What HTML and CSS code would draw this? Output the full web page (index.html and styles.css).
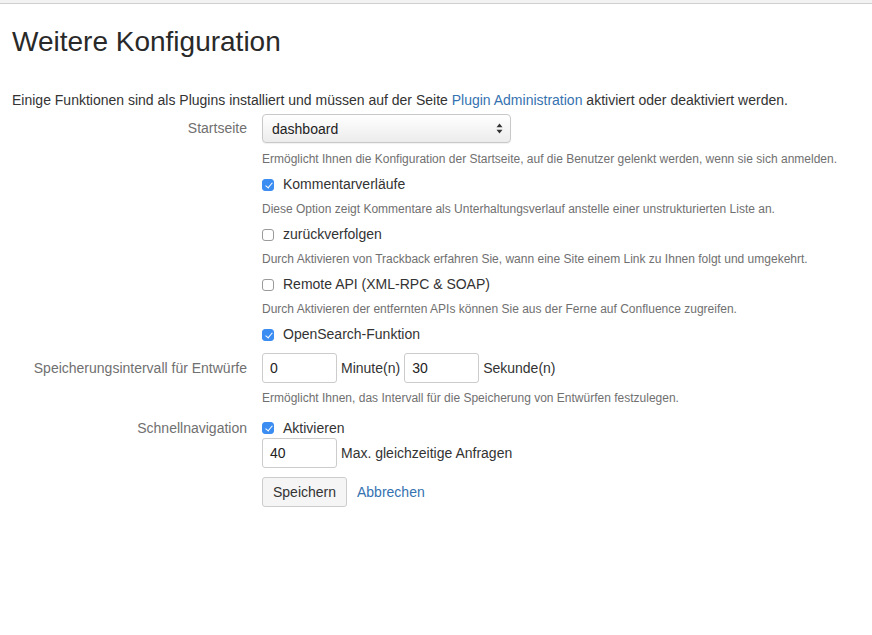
FILE: index.html
```html
<!DOCTYPE html>
<html lang="de">
<head>
<meta charset="utf-8">
<title>Weitere Konfiguration</title>
<link rel="stylesheet" href="styles.css">
</head>
<body>
<div class="topbar"></div>
<main class="page">
  <h1 class="title">Weitere Konfiguration</h1>
  <p class="intro">Einige Funktionen sind als Plugins installiert und müssen auf der Seite <a href="#" class="link">Plugin Administration</a> aktiviert oder deaktiviert werden.</p>

  <form class="form">
    <div class="group">
      <label class="label label-select">Startseite</label>
      <div class="field">
        <div class="select">
          <span>dashboard</span>
          <svg class="arrows" width="7" height="11" viewBox="0 0 7 11"><path d="M3.5 0.5 L6.5 4.2 H0.5 Z M3.5 10.5 L6.5 6.8 H0.5 Z" fill="#333"/></svg>
        </div>
        <div class="desc first">Ermöglicht Ihnen die Konfiguration der Startseite, auf die Benutzer gelenkt werden, wenn sie sich anmelden.</div>
        <div class="check"><span class="box on"></span>Kommentarverläufe</div>
        <div class="desc">Diese Option zeigt Kommentare als Unterhaltungsverlauf anstelle einer unstrukturierten Liste an.</div>
        <div class="check"><span class="box"></span>zurückverfolgen</div>
        <div class="desc">Durch Aktivieren von Trackback erfahren Sie, wann eine Site einem Link zu Ihnen folgt und umgekehrt.</div>
        <div class="check"><span class="box"></span>Remote API (XML-RPC &amp; SOAP)</div>
        <div class="desc">Durch Aktivieren der entfernten APIs können Sie aus der Ferne auf Confluence zugreifen.</div>
        <div class="check"><span class="box on"></span>OpenSearch-Funktion</div>
      </div>
    </div>

    <div class="group g-interval">
      <label class="label label-input">Speicherungsintervall für Entwürfe</label>
      <div class="field">
        <div class="inline">
          <span class="input">0</span><span class="unit">Minute(n)</span><span class="input">30</span><span class="unit">Sekunde(n)</span>
        </div>
        <div class="desc d-interval">Ermöglicht Ihnen, das Intervall für die Speicherung von Entwürfen festzulegen.</div>
      </div>
    </div>

    <div class="group g-quick">
      <label class="label label-check">Schnellnavigation</label>
      <div class="field">
        <div class="check tight"><span class="box on"></span>Aktivieren</div>
        <div class="inline">
          <span class="input">40</span><span class="unit">Max. gleichzeitige Anfragen</span>
        </div>
      </div>
    </div>

    <div class="group g-buttons">
      <div></div>
      <div class="field buttons">
        <span class="button">Speichern</span>
        <a href="#" class="link cancel">Abbrechen</a>
      </div>
    </div>
  </form>
</main>
</body>
</html>
```

FILE: styles.css
```css
* { box-sizing: border-box; }
html, body { margin: 0; padding: 0; background: #fff; }
body {
  font-family: "Liberation Sans", Arial, Helvetica, sans-serif;
  font-size: 14px;
  color: #333;
}
.topbar {
  height: 4px;
  background: #f2f2f2;
  border-bottom: 1px solid #cfcfcf;
}
.page { padding: 0 12px; }
.title {
  margin: 0;
  padding-top: 22px;
  font-size: 28px;
  line-height: 32px;
  font-weight: normal;
  color: #292929;
}
.intro {
  margin: 32px 0 0 0;
  line-height: 20px;
  color: #333;
}
.link { color: #3572b0; text-decoration: none; }
.form { margin-top: 4px; }
.group {
  display: grid;
  grid-template-columns: 235px 1fr;
  column-gap: 15px;
}
.label {
  text-align: right;
  color: #707070;
}
.label-select { line-height: 29px; }
.label-input { line-height: 30px; }
.label-check { line-height: 20px; }
.field { display: flex; flex-direction: column; align-items: flex-start; }
.select {
  width: 249px;
  height: 29px;
  border: 1px solid #c8c8c8;
  border-radius: 4px;
  background: linear-gradient(#ffffff, #ececec);
  display: flex;
  align-items: center;
  justify-content: space-between;
  padding: 0 7px 0 9px;
  color: #222;
  box-shadow: 0 1px 1px rgba(0,0,0,0.06);
}
.desc {
  font-size: 12px;
  color: #707070;
  line-height: 25px;
}
.desc.first { margin-top: 4px; }
.check {
  display: flex;
  align-items: center;
  line-height: 25px;
  color: #333;
}
.check.tight { line-height: 20px; }
.box {
  width: 12px;
  height: 12px;
  border: 1px solid #9a9a9a;
  border-radius: 3px;
  background: #fff;
  margin-right: 9px;
  flex: none;
  position: relative;
}
.box.on {
  background: #3b8df1;
  border-color: #3b8df1;
}
.box.on::after {
  content: "";
  position: absolute;
  left: 3.5px;
  top: 1px;
  width: 3px;
  height: 6px;
  border: solid #fff;
  border-width: 0 1.5px 1.5px 0;
  transform: rotate(40deg);
}
.g-interval { margin-top: 6px; }
.inline { display: flex; align-items: center; }
.input {
  display: inline-flex;
  align-items: center;
  width: 75px;
  height: 30px;
  border: 1px solid #cccccc;
  border-radius: 3px;
  padding-left: 7px;
  background: #fff;
  color: #222;
}
.unit { margin: 0 4px; color: #333; }
.d-interval { margin-top: 3px; }
.g-quick { margin-top: 7px; }
.g-buttons { margin-top: 9px; }
.buttons { flex-direction: row; align-items: center; }
.button {
  display: inline-flex;
  align-items: center;
  justify-content: center;
  width: 85px;
  height: 30px;
  border: 1px solid #cccccc;
  border-radius: 3px;
  background: #f5f5f5;
  color: #333;
}
.cancel { margin-left: 10px; }
```
